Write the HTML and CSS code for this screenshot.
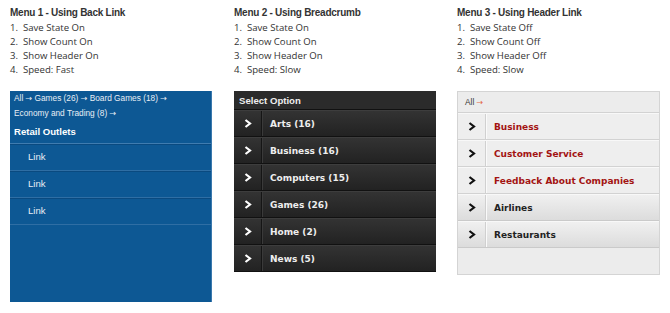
FILE: index.html
```html
<!DOCTYPE html>
<html>
<head>
<meta charset="utf-8">
<link rel="stylesheet" href="styles.css">
</head>
<body>
<div class="cols">
  <section class="col">
    <h3 class="title">Menu 1 - Using Back Link</h3>
    <ol class="opts">
      <li>1.&nbsp; Save State On</li>
      <li>2.&nbsp; Show Count On</li>
      <li>3.&nbsp; Show Header On</li>
      <li>4.&nbsp; Speed: Fast</li>
    </ol>
    <div class="blue">
      <div class="crumbs">All <span class="ar">→</span> Games (26) <span class="ar">→</span> Board Games (18) <span class="ar">→</span><br>Economy and Trading (8) <span class="ar">→</span></div>
      <div class="bhead">Retail Outlets</div>
      <div class="blink">Link</div>
      <div class="blink">Link</div>
      <div class="blink">Link</div>
    </div>
  </section>
  <section class="col">
    <h3 class="title">Menu 2 - Using Breadcrumb</h3>
    <ol class="opts">
      <li>1.&nbsp; Save State On</li>
      <li>2.&nbsp; Show Count On</li>
      <li>3.&nbsp; Show Header On</li>
      <li>4.&nbsp; Speed: Slow</li>
    </ol>
    <div class="dark">
      <div class="dhead">Select Option</div>
      <div class="drow"><span class="chev"><svg width="8" height="9" viewBox="0 0 8 9"><path d="M1.5 1 L6 4.5 L1.5 8" fill="none" stroke="#fff" stroke-width="2.2"/></svg></span><span class="dtxt">Arts (16)</span></div>
      <div class="drow"><span class="chev"><svg width="8" height="9" viewBox="0 0 8 9"><path d="M1.5 1 L6 4.5 L1.5 8" fill="none" stroke="#fff" stroke-width="2.2"/></svg></span><span class="dtxt">Business (16)</span></div>
      <div class="drow"><span class="chev"><svg width="8" height="9" viewBox="0 0 8 9"><path d="M1.5 1 L6 4.5 L1.5 8" fill="none" stroke="#fff" stroke-width="2.2"/></svg></span><span class="dtxt">Computers (15)</span></div>
      <div class="drow"><span class="chev"><svg width="8" height="9" viewBox="0 0 8 9"><path d="M1.5 1 L6 4.5 L1.5 8" fill="none" stroke="#fff" stroke-width="2.2"/></svg></span><span class="dtxt">Games (26)</span></div>
      <div class="drow"><span class="chev"><svg width="8" height="9" viewBox="0 0 8 9"><path d="M1.5 1 L6 4.5 L1.5 8" fill="none" stroke="#fff" stroke-width="2.2"/></svg></span><span class="dtxt">Home (2)</span></div>
      <div class="drow"><span class="chev"><svg width="8" height="9" viewBox="0 0 8 9"><path d="M1.5 1 L6 4.5 L1.5 8" fill="none" stroke="#fff" stroke-width="2.2"/></svg></span><span class="dtxt">News (5)</span></div>
    </div>
  </section>
  <section class="col">
    <h3 class="title">Menu 3 - Using Header Link</h3>
    <ol class="opts">
      <li>1.&nbsp; Save State Off</li>
      <li>2.&nbsp; Show Count Off</li>
      <li>3.&nbsp; Show Header Off</li>
      <li>4.&nbsp; Speed: Slow</li>
    </ol>
    <div class="light">
      <div class="lhead">All&nbsp;<span class="lar">→</span></div>
      <div class="lrow"><span class="lchev"><svg width="8" height="9" viewBox="0 0 8 9"><path d="M1.5 1 L6 4.5 L1.5 8" fill="none" stroke="#111" stroke-width="2.2"/></svg></span><span class="ltxt red">Business</span></div>
      <div class="lrow"><span class="lchev"><svg width="8" height="9" viewBox="0 0 8 9"><path d="M1.5 1 L6 4.5 L1.5 8" fill="none" stroke="#111" stroke-width="2.2"/></svg></span><span class="ltxt red">Customer Service</span></div>
      <div class="lrow"><span class="lchev"><svg width="8" height="9" viewBox="0 0 8 9"><path d="M1.5 1 L6 4.5 L1.5 8" fill="none" stroke="#111" stroke-width="2.2"/></svg></span><span class="ltxt red">Feedback About Companies</span></div>
      <div class="lrow grad"><span class="lchev"><svg width="8" height="9" viewBox="0 0 8 9"><path d="M1.5 1 L6 4.5 L1.5 8" fill="none" stroke="#111" stroke-width="2.2"/></svg></span><span class="ltxt">Airlines</span></div>
      <div class="lrow grad"><span class="lchev"><svg width="8" height="9" viewBox="0 0 8 9"><path d="M1.5 1 L6 4.5 L1.5 8" fill="none" stroke="#111" stroke-width="2.2"/></svg></span><span class="ltxt">Restaurants</span></div>
    </div>
  </section>
</div>
</body>
</html>
```
FILE: styles.css
```css
html, body { margin: 0; padding: 0; background: #fff; }
body { font-family: "Liberation Sans", Arial, sans-serif; color: #333; }
.cols { display: flex; gap: 22px; padding: 6px 0 0 10px; }
.col { width: 202px; flex: none; }
.col:nth-child(3) { width: 203px; margin-left: -1px; }
.title { margin: 0; font-size: 10px; letter-spacing: -0.25px; font-weight: bold; line-height: 14px; color: #333; }
.opts { list-style: none; margin: 1px 0 0 0; padding: 0; font-family: "Open Sans", sans-serif; font-size: 9.6px; line-height: 14px; color: #333; }
.opts li { margin: 0; }
.blue { margin-top: 14px; height: 211px; background: #0d5894; box-sizing: border-box; border-right: 1px solid #3a78ad; }
.crumbs { padding: 0 0 0 4px; font-size: 8.3px; line-height: 14px; color: #e8eef5; }
.ar { font-family: "DejaVu Sans", sans-serif; font-size: 8px; }
.bhead { padding-left: 4px; height: 22px; line-height: 22px; font-size: 9.6px; font-weight: bold; color: #fff; border-bottom: 1px solid #3f7cb0; }
.blink { height: 27px; line-height: 24px; padding-left: 18px; font-size: 9.6px; color: #e8eef5; border-bottom: 1px solid #2f6ea4; box-sizing: border-box; border-top: 1px solid #0a4a80; }
.blink:first-of-type { border-top: 0; line-height: 24px; }
.dark { margin-top: 14px; background: #1e1e1e; }
.dhead { height: 19px; line-height: 19px; padding-left: 5px; font-size: 9.6px; font-weight: bold; color: #eee; background: #2b2b2b; box-sizing: border-box; border-bottom: 1px solid #111; }
.drow { display: flex; height: 27px; box-sizing: border-box; background: linear-gradient(#333, #222); border-top: 1px solid #3d3d3d; border-bottom: 1px solid #111; }
.chev { width: 27px; flex: none; display: flex; align-items: center; justify-content: center; border-right: 1px solid #151515; box-shadow: 1px 0 0 #3a3a3a; }
.dtxt { padding-left: 8px; display: flex; align-items: center; font-family: "DejaVu Sans", sans-serif; font-size: 9px; font-weight: bold; color: #eee; }
.light { margin-top: 14px; height: 184px; background: #ececec; border: 1px solid #d4d4d4; box-sizing: border-box; }
.lhead { height: 21px; line-height: 20px; padding-left: 7px; font-size: 8.3px; color: #333; border-bottom: 1px solid #d2d2d2; box-sizing: border-box; }
.lar { font-family: "DejaVu Sans", sans-serif; font-size: 8px; color: #e36a4a; }
.lrow { display: flex; height: 27px; box-sizing: border-box; background: #eeeeee; border-top: 1px solid #f8f8f8; border-bottom: 1px solid #d2d2d2; }
.lrow.grad { background: linear-gradient(#f0f0f0, #dcdcdc); border-bottom: 1px solid #cacaca; }
.lchev { width: 27px; flex: none; display: flex; align-items: center; justify-content: center; border-right: 1px solid #d0d0d0; box-shadow: 1px 0 0 #fafafa; }
.ltxt { padding-left: 8px; display: flex; align-items: center; font-family: "DejaVu Sans", sans-serif; font-size: 9px; font-weight: bold; color: #222; }
.ltxt.red { color: #a31413; }
```
